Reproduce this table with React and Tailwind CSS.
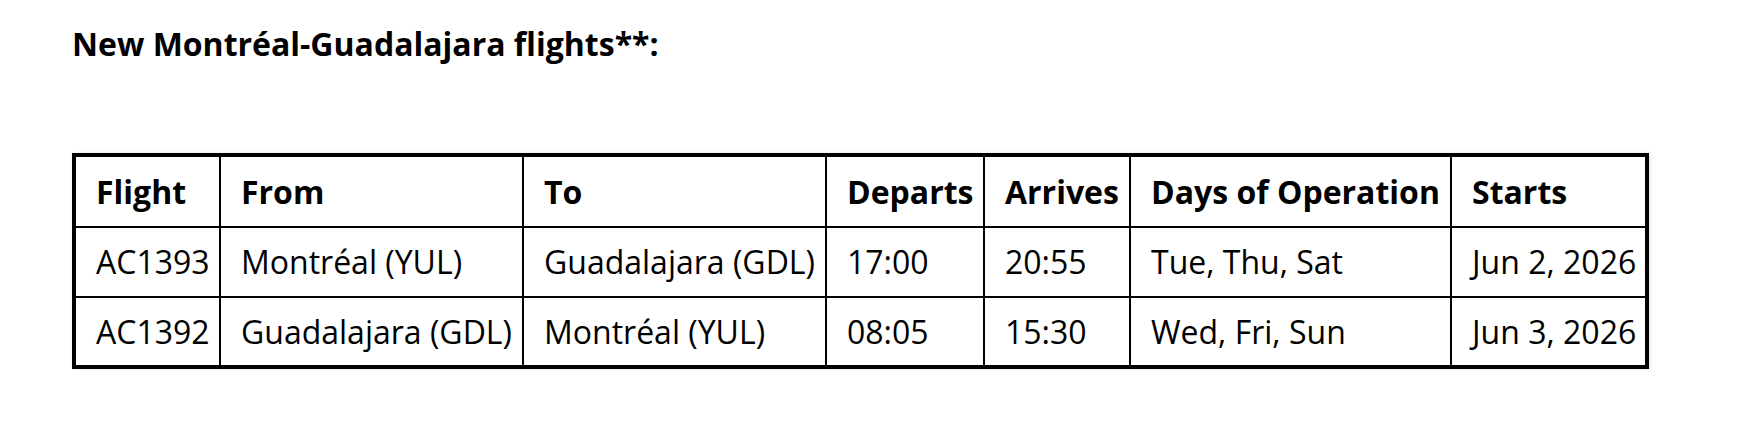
import React from 'react';

const flights = [
  { flight: 'AC1393', from: 'Montréal (YUL)', to: 'Guadalajara (GDL)', departs: '17:00', arrives: '20:55', days: 'Tue, Thu, Sat', starts: 'Jun 2, 2026' },
  { flight: 'AC1392', from: 'Guadalajara (GDL)', to: 'Montréal (YUL)', departs: '08:05', arrives: '15:30', days: 'Wed, Fri, Sun', starts: 'Jun 3, 2026' },
];

const columns = [
  { key: 'flight', label: 'Flight', width: 'w-[146px]' },
  { key: 'from', label: 'From', width: 'w-[303px]' },
  { key: 'to', label: 'To', width: 'w-[303px]' },
  { key: 'departs', label: 'Departs', width: 'w-[158px]' },
  { key: 'arrives', label: 'Arrives', width: 'w-[146px]' },
  { key: 'days', label: 'Days of Operation', width: 'w-[321px]' },
  { key: 'starts', label: 'Starts', width: 'w-[196px]' },
];

export default function App() {
  return (
    <div className="min-h-[436px] bg-white pl-[72px] pt-[22px] text-black font-['Open_Sans',sans-serif]">
      <h2 className="text-[32px] leading-[44px] font-bold">New Montréal-Guadalajara flights**:</h2>

      <table className="mt-[87px] w-[1573px] table-fixed border-collapse border-[4px] border-black text-[32px] leading-[44px] shadow-[1px_0_3px_rgba(0,0,0,0.12)]">
        <thead>
          <tr className="h-[72px]">
            {columns.map(col => (
              <th
                key={col.key}
                className={`${col.width} border-2 border-black pl-[20px] pr-[8px] text-left align-middle font-bold whitespace-nowrap`}
              >
                {col.label}
              </th>
            ))}
          </tr>
        </thead>
        <tbody>
          {flights.map(row => (
            <tr key={row.flight} className="h-[70px]">
              {columns.map(col => (
                <td
                  key={col.key}
                  className="border-2 border-black pl-[20px] pr-[8px] align-middle font-normal whitespace-nowrap"
                >
                  {row[col.key]}
                </td>
              ))}
            </tr>
          ))}
        </tbody>
      </table>
    </div>
  );
}
